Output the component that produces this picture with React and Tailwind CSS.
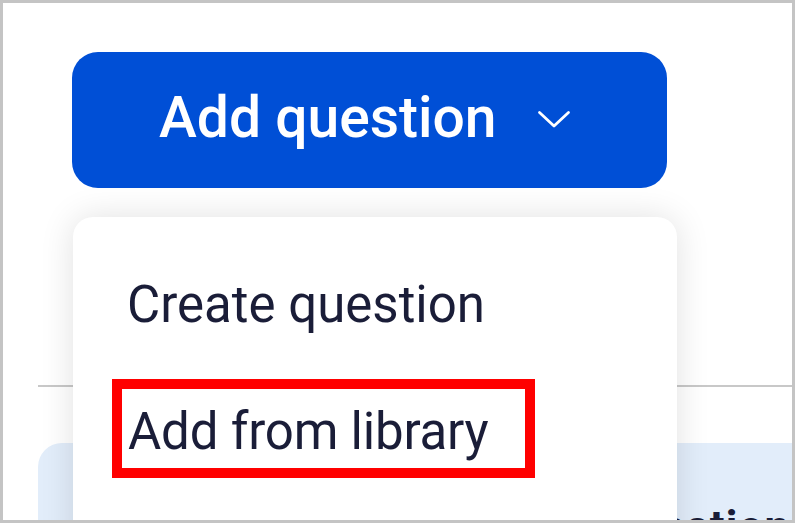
export default function App() {
  return (
    <div className="relative h-[523px] w-[795px] overflow-hidden border-[3px] border-[#c4c4c4] bg-white font-['Roboto',sans-serif]">
      <div className="flex h-full flex-col">
        <div className="shrink-0 pl-[69px] pt-[49px]">
          <button className="flex h-[136px] w-[595px] items-center rounded-[26px] bg-[#004fd6] pb-[5px] pl-[87px] text-white">
            <span className="text-[57px] font-medium leading-none">Add question</span>
            <svg className="ml-[40px] mt-[4px]" width="34" height="19" viewBox="0 0 34 19" fill="none">
              <path d="M2.5 2.5L17 16L31.5 2.5" stroke="white" strokeWidth="2.8" strokeLinecap="round" strokeLinejoin="round" />
            </svg>
          </button>
        </div>

        <div className="ml-[35px] mt-[197px] h-[2px] shrink-0 bg-[#c8c8c8]" />

        <div className="ml-[35px] mt-[56px] min-h-0 flex-1 overflow-hidden rounded-tl-[24px] bg-[#e2edfa] pl-[566px] pt-[62px]">
          <span className="whitespace-nowrap text-[44px] font-bold leading-none tracking-wide text-[#1a1d38]">
            Question
          </span>
        </div>
      </div>

      {/* dropdown menu over the page */}
      <div className="absolute left-[70px] top-[214px] h-[360px] w-[604px] rounded-[20px] bg-white pt-[62px] shadow-[0_0_34px_rgba(0,0,0,0.12)]">
        <div className="pl-[54px] text-[51px] leading-none text-[#1a1d38]">Create question</div>
        <div className="ml-[39px] mt-[49px] w-[423px] border-[10px] border-[#ff0000] pb-[11px] pl-[6px] pt-[17px] text-[51px] leading-none tracking-[-0.2px] text-[#1a1d38]">
          Add from library
        </div>
      </div>
    </div>
  );
}
